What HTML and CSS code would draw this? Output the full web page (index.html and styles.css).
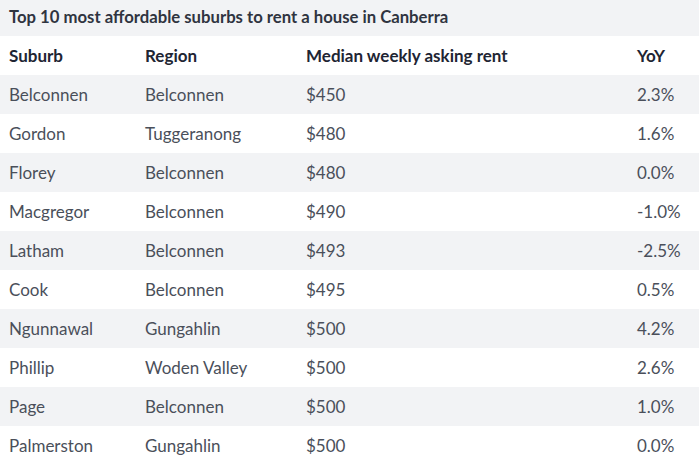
FILE: index.html
```html
<!DOCTYPE html>
<html lang="en">
<head>
<meta charset="utf-8">
<link rel="stylesheet" href="styles.css">
</head>
<body>
<div class="wrap">
  <div class="title">Top 10 most affordable suburbs to rent a house in Canberra</div>
  <table class="tbl">
    <thead>
      <tr><th class="c1">Suburb</th><th class="c2">Region</th><th class="c3">Median weekly asking rent</th><th class="c4">YoY</th></tr>
    </thead>
    <tbody>
      <tr><td>Belconnen</td><td>Belconnen</td><td>$450</td><td class="num">2.3%</td></tr>
      <tr><td>Gordon</td><td>Tuggeranong</td><td>$480</td><td class="num">1.6%</td></tr>
      <tr><td>Florey</td><td>Belconnen</td><td>$480</td><td class="num">0.0%</td></tr>
      <tr><td>Macgregor</td><td>Belconnen</td><td>$490</td><td class="num">-1.0%</td></tr>
      <tr><td>Latham</td><td>Belconnen</td><td>$493</td><td class="num">-2.5%</td></tr>
      <tr><td>Cook</td><td>Belconnen</td><td>$495</td><td class="num">0.5%</td></tr>
      <tr><td>Ngunnawal</td><td>Gungahlin</td><td>$500</td><td class="num">4.2%</td></tr>
      <tr><td>Phillip</td><td>Woden Valley</td><td>$500</td><td class="num">2.6%</td></tr>
      <tr><td>Page</td><td>Belconnen</td><td>$500</td><td class="num">1.0%</td></tr>
      <tr><td>Palmerston</td><td>Gungahlin</td><td>$500</td><td class="num">0.0%</td></tr>
    </tbody>
  </table>
</div>
</body>
</html>
```
FILE: styles.css
```css
html, body {
  margin: 0;
  padding: 0;
  background: #ffffff;
}
.wrap {
  width: 699px;
  font-family: "Source Sans Pro", Lato, "Noto Sans", sans-serif;
}
.title {
  height: 36px;
  line-height: 34px;
  background: #f2f3f5;
  color: #2f3440;
  font-size: 16.7px;
  font-weight: 700;
  padding-left: 9px;
  box-sizing: border-box;
}
.tbl {
  width: 100%;
  border-collapse: collapse;
  table-layout: fixed;
}
.tbl th, .tbl td {
  height: 39px;
  padding: 0;
  text-align: left;
  font-size: 17px;
  vertical-align: middle;
}
.tbl th {
  font-weight: 700;
  color: #1e2533;
}
.tbl td {
  color: #4a4f5a;
}
.c1 { width: 136px; padding-left: 9px !important; }
.tbl td:first-child { padding-left: 9px; }
.c2 { width: 161px; }
.c3 { width: 331px; }
.c4 { width: auto; }
.tbl tbody tr:nth-child(odd) { background: #f2f3f5; }
.tbl .num {
  text-align: center;
  padding-right: 26px;
}
```
